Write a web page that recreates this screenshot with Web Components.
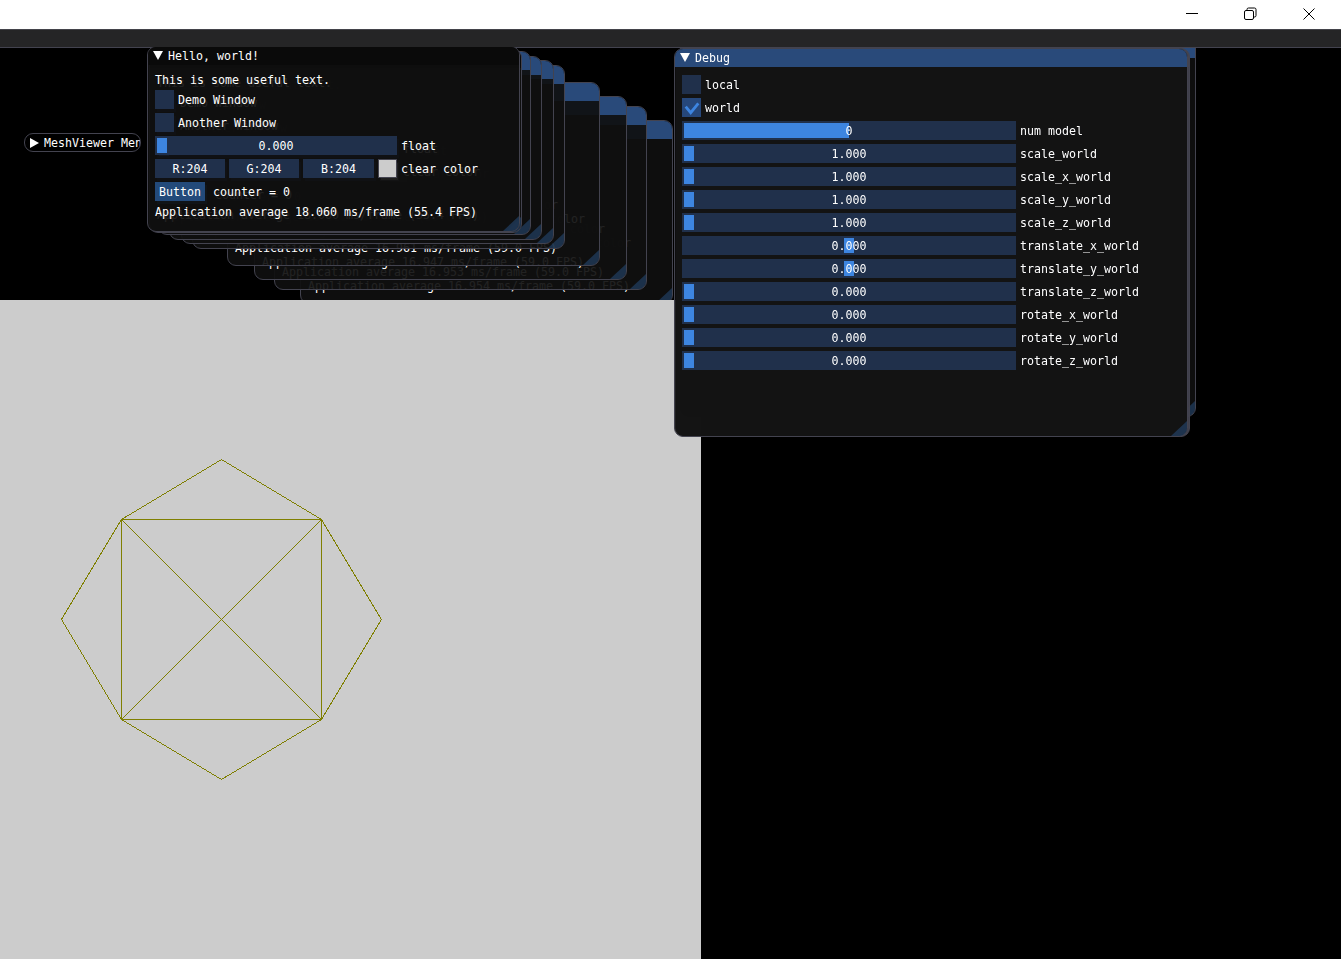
<!DOCTYPE html>
<html>
<head>
<meta charset="utf-8">
<title>MeshViewer</title>
<style>
  html, body { margin: 0; height: 100%; background: #000; overflow: hidden; }
  body { font: 11.63px/13px "DejaVu Sans Mono", "Liberation Mono", monospace; color: #fff; }
</style>
</head>
<body>
<app-shell>
  <stale-stack></stale-stack>
  <gl-viewport></gl-viewport>
  <gl-window x="680" y="-8" w="516" h="378" active title="Debug"></gl-window>
  <stage-edge></stage-edge>
  <debug-window></debug-window>
  <mesh-tab></mesh-tab>
  <hello-window x="149" y="2" w="373" h="184" title="Hello, world!" fps="18.060" rate="55.4" dark></hello-window>
  <hello-window x="147" y="-1" w="373" h="186" title="Hello, world!" fps="18.060" rate="55.4" dark></hello-window>
</app-shell>

<script>
const define = (name, cls) => window.customElements.define(name, cls)

class AppShell extends HTMLElement {
  constructor () {
    super()
    this.attachShadow({mode: 'open'}).innerHTML = `
      <style>
        :host { display: flex; flex-direction: column; height: 959px; }
        .caption { height: 29px; background: #fff; display: flex; justify-content: flex-end; }
        .caption svg { display: block; }
        .menu { background: #252526; border-top: 1px solid #43434a; height: 17px; }
        .stage { position: relative; flex: 1; overflow: hidden; background: #000; }
      </style>
      <div class='caption'>
        <svg width='1341' height='29' fill='none' stroke='#000' stroke-width='1'>
          <path d='M1186 13.5h12'/>
          <rect x='1244.5' y='10.5' width='9' height='9' rx='1.5'/>
          <path d='M1247 10.5v-1a1.5 1.5 0 0 1 1.5-1.5h6a1.5 1.5 0 0 1 1.5 1.5v6a1.5 1.5 0 0 1-1.5 1.5h-1'/>
          <path d='M1303.5 8.5l11 11M1314.5 8.5l-11 11'/>
        </svg>
      </div>
      <div class='menu'></div>
      <div class='stage'><slot></slot></div>
    `
  }
}

// menu bar bottom line, old frames pass under it but the top window does not
class StageEdge extends HTMLElement {
  constructor () {
    super()
    this.attachShadow({mode: 'open'}).innerHTML = `
      <style>
        :host { display: block; position: absolute; left: 0; right: 0; top: 0; height: 1px; background: #43434f; }
      </style>
    `
  }
}

class GlWindow extends HTMLElement {
  static get observedAttributes () {
    return ['x', 'y', 'w', 'h', 'title']
  }

  constructor () {
    super()
    this.attachShadow({mode: 'open'}).innerHTML = `
      <style>
        :host { display: block; position: absolute; }
        .box { position: relative; box-sizing: border-box; height: 100%; border: 1px solid #43434f; border-radius: 9px; overflow: hidden; background: rgba(15, 15, 15, .92); }
        .title { height: 18px; display: flex; align-items: center; gap: 5px; padding-left: 5px; background: #0a0a0a; white-space: nowrap; }
        :host([active]) .title { background: #294a7a; }
        .title svg { display: block; margin-top: -2px; }
        .body { padding: 8px 7px; display: flex; flex-direction: column; gap: 4px; }
        .grip { position: absolute; right: 0; bottom: 0; width: 16px; height: 15px; background: rgba(66, 150, 250, .25); clip-path: polygon(100% 0, 100% 100%, 0 100%); }
      </style>
      <div class='box'>
        <div class='title'>
          <svg width='10' height='9'><path d='M0 0h10L5 9z' fill='#fff'/></svg>
          <span class='t'></span>
        </div>
        <div class='body'><slot></slot></div>
        <div class='grip'></div>
      </div>
    `
  }

  attributeChangedCallback (name, old, value) {
    if (name === 'title') this.shadowRoot.querySelector('.t').textContent = value
    if (name === 'x') this.style.left = value + 'px'
    if (name === 'y') this.style.top = value + 'px'
    if (name === 'w') this.style.width = value + 'px'
    if (name === 'h') this.style.height = value + 'px'
  }
}

class GlCheck extends HTMLElement {
  constructor () {
    super()
    this.attachShadow({mode: 'open'}).innerHTML = `
      <style>
        :host { display: flex; align-items: center; gap: 4px; height: 19px; }
        .b { width: 19px; height: 19px; background: #20304b; }
        :host([on]) .b { background: #26477a; }
        svg { display: none; }
        :host([on]) svg { display: block; }
        span { padding-top: 2px; }
      </style>
      <div class='b'>
        <svg width='19' height='19' fill='none' stroke='#3d85e0' stroke-width='2.8'><path d='M3.7 8.7l5 6L16.3 5.3'/></svg>
      </div>
      <span><slot></slot></span>
    `
  }
}

class GlSlider extends HTMLElement {
  constructor () {
    super()
    this.attachShadow({mode: 'open'}).innerHTML = `
      <style>
        :host { display: flex; align-items: center; gap: 4px; height: 19px; }
        .f { position: relative; flex: none; height: 19px; background: #20304b; display: flex; align-items: center; justify-content: center; }
        .g { position: absolute; top: 2px; bottom: 2px; background: #3d85e0; }
        .v { position: relative; }
        span { padding-top: 2px; }
      </style>
      <div class='f'><div class='g'></div><span class='v'></span></div>
      <span><slot></slot></span>
    `
  }

  connectedCallback () {
    const r = this.shadowRoot
    r.querySelector('.f').style.width = this.getAttribute('w') + 'px'
    r.querySelector('.v').textContent = this.getAttribute('value')
    const g = r.querySelector('.g')
    g.style.left = (this.getAttribute('at') || 2) + 'px'
    g.style.width = (this.getAttribute('grab') || 10) + 'px'
  }
}

class HelloWindow extends HTMLElement {
  constructor () {
    super()
    this.attachShadow({mode: 'open'}).innerHTML = `
      <style>
        :host { display: contents; }
        .row { display: flex; align-items: center; gap: 4px; height: 19px; }
        .row span { padding-top: 2px; }
        .text { height: 13px; line-height: 15px; white-space: nowrap; }
        .c { box-sizing: border-box; padding-top: 2px; width: 70px; height: 19px; background: #20304b; display: flex; align-items: center; justify-content: center; }
        .c.b { width: 71px; }
        .sw { box-sizing: border-box; width: 19px; height: 19px; background: #ccc; border: 1px solid #43434f; }
        .btn { box-sizing: border-box; padding-top: 2px; width: 50px; height: 19px; background: #234a7a; display: flex; align-items: center; justify-content: center; margin-right: 4px; }
      </style>
      <gl-window>
        <div class='text'>This is some useful text.</div>
        <gl-check>Demo Window</gl-check>
        <gl-check>Another Window</gl-check>
        <gl-slider w='242' value='0.000'>float</gl-slider>
        <div class='row'>
          <div class='c'>R:204</div><div class='c'>G:204</div><div class='c b'>B:204</div><div class='sw'></div><span>clear color</span>
        </div>
        <div class='row'><div class='btn'>Button</div><span>counter = 0</span></div>
        <div class='text fps'></div>
      </gl-window>
    `
  }

  connectedCallback () {
    const w = this.shadowRoot.querySelector('gl-window')
    for (const a of ['x', 'y', 'w', 'h', 'title']) w.setAttribute(a, this.getAttribute(a))
    if (!this.hasAttribute('dark')) w.setAttribute('active', '')
    this.shadowRoot.querySelector('.fps').textContent =
      `Application average ${this.getAttribute('fps')} ms/frame (${this.getAttribute('rate')} FPS)`
  }
}

// old frames left in the buffer, bottom one first
class StaleStack extends HTMLElement {
  constructor () {
    super()
    const frames = [
      [300, 73, '16.954'], [274, 59, '16.953'], [254, 49, '16.947'], [227, 35, '16.961'],
      [192, 18, '16.958'], [181, 13, '16.950'], [169, 9, '16.949'], [158, 4, '16.952']
    ]
    this.attachShadow({mode: 'open'}).innerHTML = `
      <style>:host { display: contents; }</style>
      ${frames.map(f => `<hello-window x='${f[0]}' y='${f[1]}' w='373' h='184' title='Hello, world!' fps='${f[2]}' rate='59.0'></hello-window>`).join('')}
    `
  }
}

class GlViewport extends HTMLElement {
  constructor () {
    super()
    this.attachShadow({mode: 'open'}).innerHTML = `
      <style>
        :host { display: block; position: absolute; left: 0; top: 253px; width: 701px; height: 659px; background: #ccc; }
        svg { display: block; shape-rendering: crispEdges; }
      </style>
      <svg width='701' height='659' fill='none' stroke='#7f7f00' stroke-width='1'>
        <path d='M221.5 159.5L321.5 219.5L381.5 319.5L321.5 419.5L221.5 479.5L121.5 419.5L61.5 319.5L121.5 219.5Z'/>
        <path d='M121.5 219.5L321.5 419.5M321.5 219.5L121.5 419.5'/>
        <path d='M121.5 219.5H321.5V419.5H121.5Z'/>
      </svg>
    `
  }
}

class MeshTab extends HTMLElement {
  constructor () {
    super()
    this.attachShadow({mode: 'open'}).innerHTML = `
      <style>
        :host { display: block; position: absolute; left: 24px; top: 86px; width: 117px; height: 19px; }
        .t { box-sizing: border-box; height: 100%; border: 1px solid #43434f; border-radius: 9px; overflow: hidden; background: #000; display: flex; align-items: center; gap: 5px; padding-left: 5px; white-space: nowrap; }
        span { padding-top: 2px; }
      </style>
      <div class='t'><svg width='9' height='10' style='flex:none'><path d='M0 0l9 5l-9 5z' fill='#fff'/></svg><span>MeshViewer Menu</span></div>
    `
  }
}

class DebugWindow extends HTMLElement {
  constructor () {
    super()
    const rows = [
      ['0', 'num model', 2, 165], ['1.000', 'scale_world'], ['1.000', 'scale_x_world'],
      ['1.000', 'scale_y_world'], ['1.000', 'scale_z_world'], ['0.000', 'translate_x_world', 162],
      ['0.000', 'translate_y_world', 162], ['0.000', 'translate_z_world'], ['0.000', 'rotate_x_world'],
      ['0.000', 'rotate_y_world'], ['0.000', 'rotate_z_world']
    ]
    this.attachShadow({mode: 'open'}).innerHTML = `
      <style>
        :host { display: contents; }
        gl-window { filter: drop-shadow(2px 0 0 #43434f); }
      </style>
      <gl-window x='674' y='1' w='514' h='389' title='Debug' active>
        <gl-check>local</gl-check>
        <gl-check on>world</gl-check>
        ${rows.map(r => `<gl-slider w='334' value='${r[0]}' at='${r[2] || 2}' grab='${r[3] || 10}'>${r[1]}</gl-slider>`).join('')}
      </gl-window>
    `
  }
}

define('gl-window', GlWindow)
define('gl-check', GlCheck)
define('gl-slider', GlSlider)
define('hello-window', HelloWindow)
define('stale-stack', StaleStack)
define('gl-viewport', GlViewport)
define('mesh-tab', MeshTab)
define('stage-edge', StageEdge)
define('debug-window', DebugWindow)
define('app-shell', AppShell)
</script>
</body>
</html>
